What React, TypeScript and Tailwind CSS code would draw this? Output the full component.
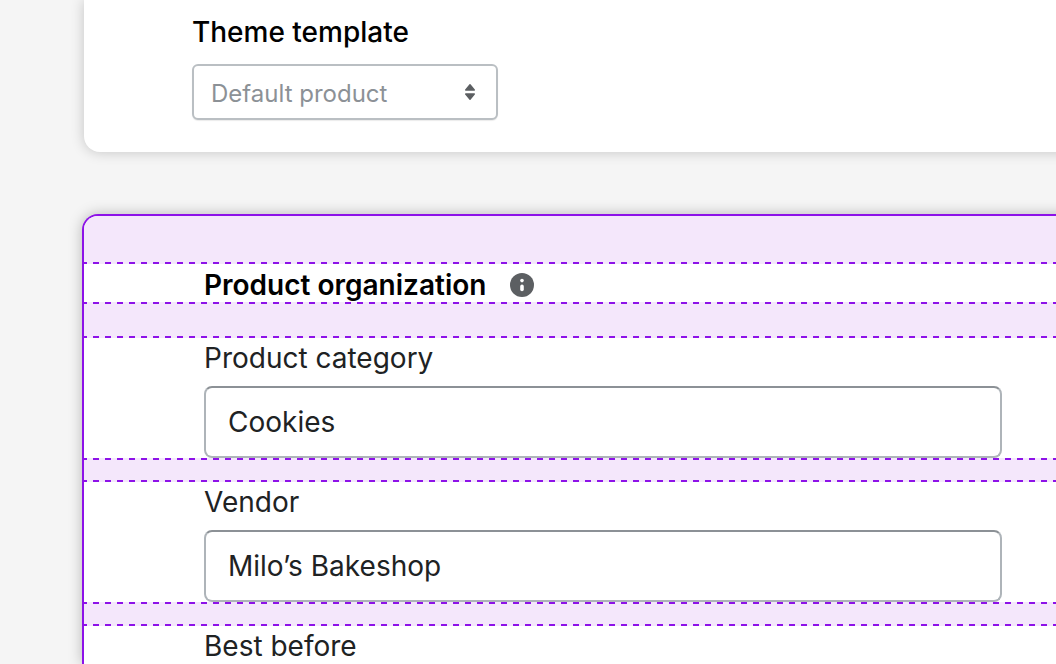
import { useId } from "react";

const dashes =
  "h-[2px] bg-[repeating-linear-gradient(to_right,#8d12e8_0px,#8d12e8_3px,transparent_3px,transparent_9px,#8d12e8_9px,#8d12e8_12px)]";

function Spacer({ height, first = false }: { height: string; first?: boolean }) {
  return (
    <div aria-hidden="true" className="bg-[#f4e7fb]">
      {!first && <div className={dashes} />}
      <div className={height} />
      <div className={dashes} />
    </div>
  );
}

function Field({ label, value }: { label: string; value: string }) {
  const id = useId();
  return (
    <div className="flex flex-col gap-2 pl-[120px] pr-[54px]">
      <label htmlFor={id} className="h-10 text-[28px] leading-10 text-[#202223]">
        {label}
      </label>
      <input
        id={id}
        type="text"
        defaultValue={value}
        className="h-[72px] w-full rounded-lg border-2 border-[#aeb4b9] border-t-[#8c9196] bg-white px-[22px] text-[28px] text-[#202223] outline-none"
      />
    </div>
  );
}

function InfoIcon() {
  return (
    <svg viewBox="0 0 24 24" className="size-6" aria-hidden="true">
      <circle cx="12" cy="12" r="12" fill="#5c5f62" />
      <circle cx="12" cy="7.6" r="1.8" fill="#fff" />
      <path d="M12 13.4v3" stroke="#fff" strokeWidth="3.6" strokeLinecap="round" />
    </svg>
  );
}

export default function App() {
  return (
    <main className="flex h-screen flex-col gap-[62px] overflow-hidden bg-[#f5f5f5] pl-[82px] font-['Inter',sans-serif]">
      <section className="-mr-4 ml-[2px] shrink-0 rounded-bl-2xl bg-white pb-8 pl-[108px] pt-3 shadow-[0_0_14px_rgba(0,0,0,0.2)]">
        <label htmlFor="template" className="block h-10 text-[28px] font-medium leading-10 text-black">
          Theme template
        </label>
        <div className="mt-3 grid w-[306px] items-center">
          <select
            id="template"
            className="col-start-1 row-start-1 h-14 w-full appearance-none rounded-md border-2 border-[#babfc3] bg-white px-[17px] pt-[3px] text-2xl text-[#8c9196] shadow-[0_1px_1px_rgba(0,0,0,0.08)] outline-none"
          >
            <option>Default product</option>
          </select>
          <svg
            viewBox="0 0 10 16"
            className="pointer-events-none col-start-1 row-start-1 mr-[23px] h-4 w-[10px] justify-self-end"
            aria-hidden="true"
          >
            <path
              d="M5 .8 9.3 6H.7ZM5 15.2.7 10h8.6Z"
              fill="#5c5f62"
              stroke="#5c5f62"
              strokeWidth="1.4"
              strokeLinejoin="round"
            />
          </svg>
        </div>
      </section>

      <section className="-mr-4 flex flex-1 flex-col overflow-hidden rounded-tl-2xl border-l-2 border-t-2 border-[#8d12e8] bg-white pr-4 shadow-[0_0_14px_rgba(0,0,0,0.25)]">
        <Spacer height="h-[46px]" first />
        <div className="flex h-[38px] shrink-0 items-center gap-6 pl-[120px] pt-1">
          <h2 className="text-[28px] font-semibold leading-[34px] text-black">Product organization</h2>
          <button type="button" aria-label="About product organization">
            <InfoIcon />
          </button>
        </div>
        <Spacer height="h-8" />
        <Field label="Product category" value="Cookies" />
        <Spacer height="h-5" />
        <Field label="Vendor" value="Milo’s Bakeshop" />
        <Spacer height="h-5" />
        <Field label="Best before" value="" />
      </section>
    </main>
  );
}
